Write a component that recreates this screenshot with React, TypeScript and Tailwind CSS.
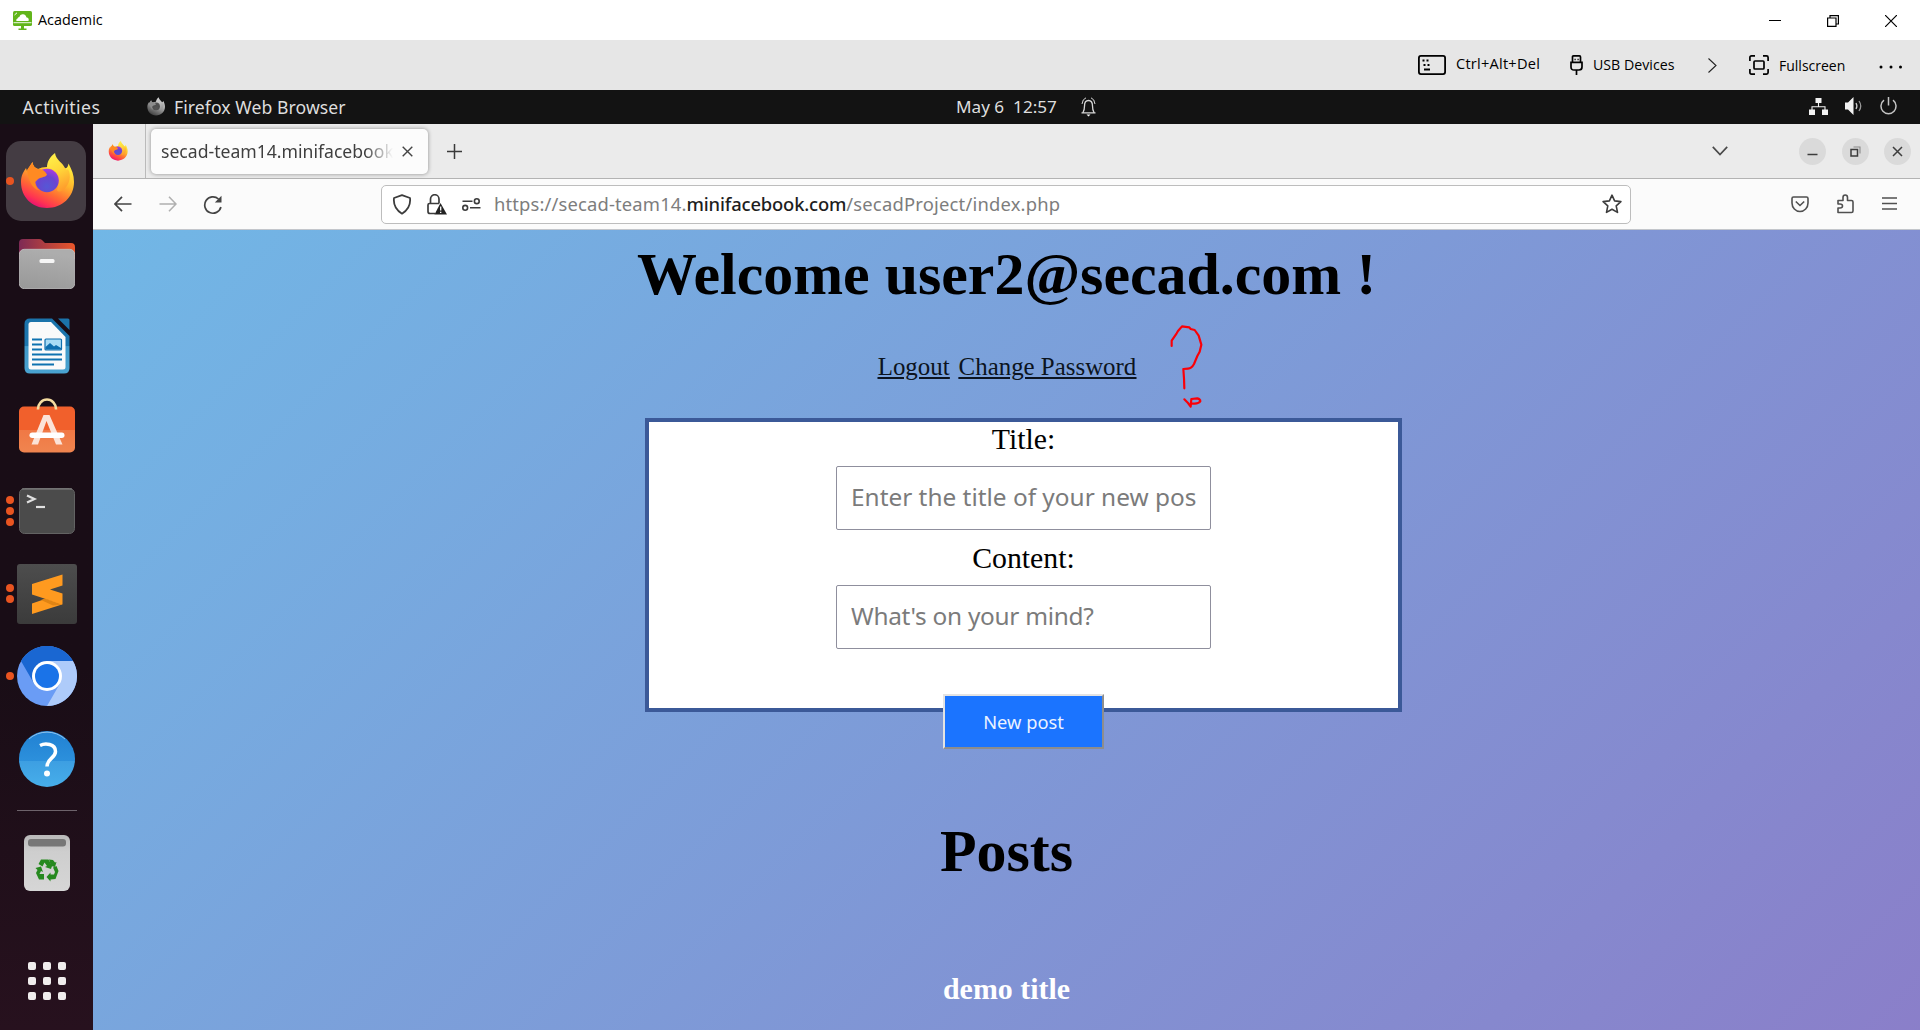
import type { ReactNode } from "react";

const ui = "font-['Noto_Sans',sans-serif]";
const win = "font-['Open_Sans','Noto_Sans',sans-serif]";
const serif = "font-['Liberation_Serif',serif]";

function FirefoxLogo({ id, className }: { id: string; className: string }) {
  return (
    <svg viewBox="-27 -28 54 56" className={className}>
      <defs>
        <linearGradient id={id + "-body"} x1="0.78" y1="0.1" x2="0.25" y2="1">
          <stop offset="0" stopColor="#ffe53a" />
          <stop offset="0.3" stopColor="#ffb52c" />
          <stop offset="0.6" stopColor="#ff6a33" />
          <stop offset="0.82" stopColor="#ff3352" />
          <stop offset="1" stopColor="#e0087c" />
        </linearGradient>
        <radialGradient id={id + "-globe"} cx="0.5" cy="0.75" r="0.7">
          <stop offset="0" stopColor="#5657d6" />
          <stop offset="0.6" stopColor="#6a45cf" />
          <stop offset="1" stopColor="#a23be0" />
        </radialGradient>
        <linearGradient id={id + "-flame"} x1="0.3" y1="0" x2="0.6" y2="1">
          <stop offset="0" stopColor="#fff04a" />
          <stop offset="0.45" stopColor="#ffd83a" />
          <stop offset="1" stopColor="#ff9a2c" />
        </linearGradient>
      </defs>
      <path
        d="M-26,1 C-26,-6 -23,-10 -21,-13 L-20,-10 C-18,-14 -16,-16 -14.5,-19 C-14,-15 -12,-13 -9,-12 C-5,-14 0,-15 6,-13 L18,-13 C20,-12 21,-15 21.5,-17.5 C25,-11 27,-6 27,1 C27,16 15,27 0,27 C-15,27 -26,16 -26,1Z"
        fill={`url(#${id}-body)`}
      />
      <path
        d="M0,-13 C0,-20 3,-24 8,-28 C9,-21 15,-19 18,-13 C19,-11 20,-11 21,-12 C25,-5 22,5 16,9 C13,11 11,11 10,9 C13,3 12,-5 9,-9 C6,-12 3,-13 0,-13Z"
        fill={`url(#${id}-flame)`}
      />
      <circle cx="0" cy="-0.5" r="11.8" fill={`url(#${id}-globe)`} />
      <path
        d="M-20,-11 L-14.5,-19 C-14,-15 -12,-13 -9,-12 C-5,-12.500 -2,-10 0,-6.500 C-1,-4 -4,-4 -7,-3 C-10,-2 -10,0 -12,1 C-12,4 -10,8 -7,9.5 C-12,9 -18,4 -20,-11Z"
        fill="#ff8a22"
      />
    </svg>
  );
}

function Slot({ dots = 0, active = false, children }: { dots?: number; active?: boolean; children: ReactNode }) {
  return (
    <div className="relative flex h-[82.5px] w-full shrink-0 items-center justify-center">
      {active && <div className="absolute left-[6px] top-[1px] h-[80px] w-[80px] rounded-[15px] bg-[#443c43]" />}
      {dots > 0 && (
        <div className="absolute left-[6px] top-0 flex h-full flex-col items-center justify-center gap-[3px]">
          {Array.from({ length: dots }, (_, i) => (
            <span key={i} className="h-2 w-2 rounded-full bg-[#e95420]" />
          ))}
        </div>
      )}
      <div className="relative flex items-center justify-center">{children}</div>
    </div>
  );
}

function Files() {
  return (
    <svg width="56" height="50" viewBox="0 0 56 50">
      <defs>
        <linearGradient id="files-back" x1="0" x2="1">
          <stop offset="0" stopColor="#7d2a55" />
          <stop offset="1" stopColor="#e9562a" />
        </linearGradient>
        <linearGradient id="files-front" x1="0" x2="0.3" y1="1" y2="0">
          <stop offset="0" stopColor="#989898" />
          <stop offset="1" stopColor="#adadad" />
        </linearGradient>
      </defs>
      <path d="M0,14 V4 Q0,0 4,0 H20 Q22,0 23,1 L26,4 H52 Q56,4 56,8 V20 H0Z" fill="url(#files-back)" />
      <rect x="0.3" y="10.3" width="55.4" height="39.4" rx="5" fill="url(#files-front)" stroke="#c4c4c4" strokeWidth="0.8" />
      <rect x="20.5" y="20" width="15" height="4" rx="1.5" fill="#f5f5f5" />
    </svg>
  );
}

function Writer() {
  return (
    <svg width="46" height="56" viewBox="0 0 46 56">
      <defs>
        <linearGradient id="writer" x1="0" x2="0" y1="0" y2="1">
          <stop offset="0" stopColor="#1b73aa" />
          <stop offset="0.5" stopColor="#1d78b0" />
          <stop offset="0.51" stopColor="#3f9aca" />
          <stop offset="1" stopColor="#4aa3d0" />
        </linearGradient>
      </defs>
      <path d="M6,0.5 H28 L45.5,18 V50 Q45.5,55.5 40,55.5 H6 Q0.5,55.5 0.5,50 V6 Q0.5,0.5 6,0.5Z" fill="url(#writer)" />
      <path d="M34,0.5 H44 Q45.500,0.500 45.500,2 V12Z" fill="#1b73aa" />
      <path d="M7,4 H27 L41.500,19 V49 Q41.500,51.500 39,51.500 H7 Q4.500,51.500 4.500,49 V6.500 Q4.500,4 7,4Z" fill="#fafafa" />
      <path d="M8,21.500 H18 M8,26.500 H18 M8,31.500 H18 M8,36.500 H38 M8,41.500 H38 M8,46.500 H30" stroke="#0f72b0" strokeWidth="2.2" />
      <rect x="21" y="21" width="16.500" height="11" rx="1" fill="#a9dcf5" stroke="#0f6fae" strokeWidth="1.2" />
      <path d="M21.500,31.500 V29 L26,25 L30,28.500 L32,27 L37,30 V31.500Z" fill="#0f6fae" />
    </svg>
  );
}

function Software() {
  return (
    <svg width="56" height="56" viewBox="0 0 56 56" className="-mt-[7px]">
      <defs>
        <linearGradient id="soft" x1="0" x2="0" y1="0" y2="1">
          <stop offset="0" stopColor="#f1602c" />
          <stop offset="0.5" stopColor="#f1602c" />
          <stop offset="0.51" stopColor="#f07845" />
          <stop offset="1" stopColor="#f0854f" />
        </linearGradient>
      </defs>
      <rect x="0" y="9.500" width="56" height="46" rx="5" fill="url(#soft)" />
      <path d="M19,12.500 V12 A9,9.500 0 0 1 37,12 V12.500" fill="none" stroke="#f5dca0" strokeWidth="2.600" />
      <path d="M12.500,47.500 L24.500,18 H30.500 L43.500,47.500 H37 L27.500,24 L19,47.500Z" fill="#fbe3d8" />
      <rect x="10.500" y="35.500" width="35" height="5.500" rx="2.700" fill="#fff" />
    </svg>
  );
}

function Terminal() {
  return (
    <svg width="56" height="46" viewBox="0 0 56 46">
      <rect x="0.500" y="0.500" width="55" height="45" rx="5" fill="#4b4b4b" stroke="#636363" />
      <path d="M3,1 H53" stroke="#858585" strokeWidth="1" />
      <path d="M8,7.500 L15.500,11 L8,14.500" fill="none" stroke="#e0e0e0" strokeWidth="2.200" />
      <path d="M17,19 H26" stroke="#e0e0e0" strokeWidth="2.200" />
    </svg>
  );
}

function Sublime() {
  return (
    <svg width="60" height="60" viewBox="0 0 60 60">
      <defs>
        <linearGradient id="subl" x1="0" x2="0" y1="0" y2="1">
          <stop offset="0" stopColor="#4d4d4d" />
          <stop offset="1" stopColor="#3b3b3b" />
        </linearGradient>
      </defs>
      <rect width="60" height="60" rx="3" fill="url(#subl)" />
      <path d="M15,39.500 L28,35 L45,39 V40.500 L15,50Z" fill="#ff9a1f" />
      <path d="M28,34.500 L45,40.500 L36,41.500 L24,36Z" fill="#e08414" />
      <path d="M45.500,10.500 V21.500 L33,25.500 L45.500,29.500 V40.500 L15,30.500 V20Z" fill="#ff9a1f" />
    </svg>
  );
}

function Chromium() {
  return (
    <svg width="60" height="60" viewBox="-30 -30 60 60">
      <circle r="30" fill="#6a9cf5" />
      <path d="M0,-15 H26 A30,30 0 0 1 0,30 L13,7.500Z" fill="#aecbfa" />
      <path d="M-26,-15 A30,30 0 0 1 26,-15 H0 L-13,7.500Z" fill="#1a67d2" />
      <circle r="15" fill="#fff" />
      <circle r="12" fill="#1a73e8" />
    </svg>
  );
}

function Help() {
  return (
    <svg width="56" height="56" viewBox="-28 -28 56 56">
      <defs>
        <linearGradient id="help" x1="0" x2="0" y1="0" y2="1">
          <stop offset="0" stopColor="#2181d2" />
          <stop offset="0.530" stopColor="#2c90dc" />
          <stop offset="0.540" stopColor="#3d9fe2" />
          <stop offset="1" stopColor="#47aeea" />
        </linearGradient>
      </defs>
      <circle r="28" fill="url(#help)" />
      <path d="M-18,-20 A27,27 0 0 1 18,-20" stroke="#8fc4ee" fill="none" />
      <path d="M-7,-13.500 C-2,-16 8.500,-15.500 8.500,-7.500 C8.500,-1 0,-0.500 0,7.500" fill="none" stroke="#fff" strokeWidth="3.500" />
      <circle cy="14.500" r="3" fill="#fff" />
    </svg>
  );
}

function Trash() {
  return (
    <svg width="46" height="56" viewBox="0 0 46 56">
      <defs>
        <linearGradient id="trash" x1="0" x2="0" y1="0" y2="1">
          <stop offset="0" stopColor="#b9b9b9" />
          <stop offset="0.300" stopColor="#cecece" />
          <stop offset="1" stopColor="#d6d6d6" />
        </linearGradient>
      </defs>
      <rect width="46" height="56" rx="6" fill="url(#trash)" />
      <rect x="4" y="4" width="38" height="7.500" rx="3" fill="#777" />
      <g fill="#26891f" transform="translate(23 36)">
        <path d="M-6,-11.500 H1.500 L4,-7 L6,-8 L4,-2 L-2,-4 L0,-5 L-2.500,-8.500 L-4.500,-4.500 L-8.500,-7Z" />
        <path d="M-11.500,-3 L-6,-4.500 L-4,1 L-6,0 L-7.500,3 H-3 V8.500 H-8 L-11,2 L-9.500,-1Z" />
        <path d="M6,-3.500 L9.500,-5 L11.500,0 L8.500,8 L3.500,8.500 V10.500 L-0.500,6 L3.500,1.500 V3.500 H7 L8,1 Z" />
        <path d="M2,-11.500 L6,-11 L8,-8.500 L9.500,-9 L8,-4 L4,-5Z" />
      </g>
    </svg>
  );
}

function Dock() {
  return (
    <aside className="flex w-[93px] shrink-0 flex-col items-center bg-linear-to-b from-[#190d16] from-60% to-[#27111e] pt-[15.750px]">
      <Slot active dots={1}>
        <FirefoxLogo id="dock" className="h-[56px] w-[54px]" />
      </Slot>
      <Slot>
        <Files />
      </Slot>
      <Slot>
        <Writer />
      </Slot>
      <Slot>
        <Software />
      </Slot>
      <Slot dots={3}>
        <Terminal />
      </Slot>
      <Slot dots={2}>
        <Sublime />
      </Slot>
      <Slot dots={1}>
        <Chromium />
      </Slot>
      <Slot>
        <Help />
      </Slot>
      <div className="mt-[10px] h-px w-[60px] shrink-0 bg-[#6d636b]" />
      <div className="mt-[24px] shrink-0">
        <Trash />
      </div>
      <div className="mt-[71.500px] grid shrink-0 grid-cols-3 gap-[7px]">
        {Array.from({ length: 9 }, (_, i) => (
          <span key={i} className="h-2 w-2 rounded-[2px] bg-[#f0eded]" />
        ))}
      </div>
    </aside>
  );
}

function TitleBar() {
  return (
    <div className={`flex h-10 shrink-0 items-center bg-white text-black ${win}`}>
      <svg width="19" height="19" viewBox="0 0 19 19" className="ml-[12.500px] shrink-0">
        <path d="M1.500,0 H17.500 Q19,0 19,1.500 V13.500 Q19,15 17.500,15 H1.500 Q0,15 0,13.500 V1.500 Q0,0 1.500,0Z" fill="#62b51b" />
        <path d="M3.500,10 Q2.300,8.500 4.500,7.500 Q4.800,6 6.300,6 Q7,3 10,3.300 Q13,3.700 13.300,6.300 Q16.500,7 15.500,10Z" fill="#fff" />
        <path d="M1.500,4 L4,1.800" stroke="#fff" strokeWidth="1" />
        <path d="M0.500,11.700 H18.500" stroke="#fff" strokeWidth="0.900" />
        <path d="M8,15 H11 V17.500 H13.500 V19 H5.500 V17.500 H8Z" fill="#62b51b" />
      </svg>
      <span className="ml-[6.500px] flex-1 text-[14.400px] leading-10">Academic</span>
      <div className="mr-[23.500px] flex items-center gap-[46px]" aria-label="window controls">
        <svg width="12" height="12" viewBox="0 0 12 12">
          <path d="M0,6.500 H12" stroke="#000" />
        </svg>
        <svg width="12" height="12" viewBox="0 0 12 12" fill="none" stroke="#000" strokeWidth="1.200" className="mt-px">
          <path d="M0.600,3 H9 V11.400 H0.600Z M3,3 V0.600 H11.400 V9 H9" />
        </svg>
        <svg width="12" height="12" viewBox="0 0 12 12" fill="none" stroke="#000" strokeWidth="1.200" className="mt-px">
          <path d="M0,0 L12,12 M12,0 L0,12" />
        </svg>
      </div>
    </div>
  );
}

function ViewerToolbar() {
  return (
    <div className={`flex h-[50px] shrink-0 items-center bg-[#e6e6e6] pl-[1418px] text-black ${win}`}>
      <svg width="28" height="20" viewBox="0 0 28 20" className="shrink-0">
        <rect x="0.900" y="0.900" width="26.200" height="18.200" rx="2" fill="none" stroke="#000" strokeWidth="1.800" />
        <path d="M4.500,5.500 h2 M8.500,5.500 h2 M5.500,10 h2 M9.500,10 h2 M6,14.500 h6" stroke="#000" strokeWidth="1.800" />
      </svg>
      <span className="mb-[2px] ml-[10px] w-[114px] text-[14.600px] tracking-[0.230px]">Ctrl+Alt+Del</span>
      <svg width="13" height="20" viewBox="0 0 13 20" fill="none" stroke="#000" strokeWidth="1.700" className="shrink-0">
        <path d="M2.500,7 V2 Q2.500,0.900 3.500,0.900 H9.500 Q10.500,0.900 10.500,2 V7 M1,7.300 H12 V12 Q12,15 9,15 H4 Q1,15 1,12Z M6.500,15 V20" />
        <path d="M4.500,4.500 h1.200 M7.500,4.500 h1.200" />
      </svg>
      <span className="ml-[10px] w-[115px] text-[14.200px]">USB Devices</span>
      <svg width="9" height="15" viewBox="0 0 9 15" fill="none" stroke="#222" strokeWidth="1.100" className="shrink-0">
        <path d="M0.500,0.500 L8,7.500 L0.500,14.500" />
      </svg>
      <svg width="20" height="20" viewBox="0 0 20 20" fill="none" stroke="#000" strokeWidth="1.700" className="ml-[32px] shrink-0">
        <path d="M6,0.900 H2.500 Q0.900,0.900 0.900,2.500 V6 M14,0.900 H17.500 Q19.100,0.900 19.100,2.500 V6 M6,19.100 H2.500 Q0.900,19.100 0.900,17.500 V14 M14,19.100 H17.500 Q19.100,19.100 19.100,17.500 V14" />
        <rect x="5" y="6" width="10" height="8" rx="1" />
      </svg>
      <span className="ml-[10px] w-[100px] text-[14px]">Fullscreen</span>
      <svg width="24" height="4" viewBox="0 0 24 4" className="mt-[3px] shrink-0">
        <circle cx="2" cy="2" r="1.500" />
        <circle cx="12" cy="2" r="1.500" />
        <circle cx="21.500" cy="2" r="1.500" />
      </svg>
    </div>
  );
}

function TopPanel() {
  return (
    <div className={`flex h-[34px] shrink-0 items-center bg-[#131313] text-[#dedede] ${ui}`}>
      <span className="ml-[22.500px] w-[124px] text-[17.700px] tracking-[0.420px]">Activities</span>
      <FirefoxLogo id="panel" className="mt-[-2px] h-[19px] w-[18px] brightness-90 grayscale" />
      <span className="ml-[9.500px] w-[782px] text-[17.600px] tracking-[0.080px]">Firefox Web Browser</span>
      <span className="w-[125px] whitespace-pre text-[17.150px]">May 6  12:57</span>
      <svg width="15" height="20" viewBox="0 0 15 20" fill="none" stroke="#d8d8d8" strokeWidth="1.300" className="-mt-px shrink-0">
        <path d="M0.500,15.800 H14.500 M2,15.500 Q3.500,13 3.500,9 Q3.500,3.500 7.500,3.500 Q11.500,3.500 11.500,9 Q11.500,13 13,15.500" />
        <path d="M1,7 Q1.500,2 5,0.800 M14,7 Q13.500,2 10,0.800" strokeWidth="1" />
        <path d="M5.500,17.500 H9.500 L7.500,19.500Z" fill="#fff" stroke="none" />
      </svg>
      <svg width="19" height="17" viewBox="0 0 19 17" className="ml-[712.500px] mt-[-2px] shrink-0">
        <path d="M6.500,0 H12.500 V5 H6.500Z M0,11.500 H6 V17 H0Z M13,11.500 H19 V17 H13Z" fill="#f2f2f2" />
        <path d="M9.500,5 V8.500 M3,12 V8.700 H16 V12" fill="none" stroke="#f2f2f2" strokeWidth="1.100" />
      </svg>
      <svg width="18" height="18" viewBox="0 0 18 18" className="ml-[17.500px] mt-[-2px] shrink-0">
        <path d="M0,5.500 H3 L8.500,0 V18 L3,12.500 H0Z" fill="#f2f2f2" />
        <path d="M11,6 Q12.800,9 11,12" fill="none" stroke="#d0d0d0" strokeWidth="1.300" />
        <path d="M14,4 Q17.500,9 14,14" fill="none" stroke="#999" strokeWidth="1.300" />
      </svg>
      <svg width="17" height="18" viewBox="0 0 17 18" fill="none" stroke="#c4c4c4" strokeWidth="1.500" className="ml-[16.500px] mt-[-2px] shrink-0">
        <path d="M4,3.200 A7.500,7.500 0 1 0 13,3.200 M8.500,0 V8.500" />
      </svg>
    </div>
  );
}

function WindowButton({ children }: { children: ReactNode }) {
  return (
    <span className="flex h-[27px] w-[27px] items-center justify-center rounded-full bg-[#dadada]">
      <svg width="11" height="11" viewBox="0 0 11 11" fill="none" stroke="#3d3d3d" strokeWidth="1.500">
        {children}
      </svg>
    </span>
  );
}

function TabStrip() {
  return (
    <div className={`flex h-[55px] shrink-0 items-center border-b border-[#b3b3b3] bg-[#ebebeb] ${ui}`}>
      <div className="flex h-full w-[53px] items-center justify-center border-r border-[#bababa]">
        <FirefoxLogo id="pinned" className="mr-[3px] h-[20px] w-[20px]" />
      </div>
      <div className="ml-[5px] flex h-[45px] w-[277px] items-center rounded-[5px] bg-[#fcfcfc] shadow-[0_0_4px_rgba(0,0,0,0.4)]">
        <span className="ml-[10px] w-[232px] overflow-hidden whitespace-nowrap mask-r-from-88% mask-r-to-100% text-[17.600px] text-[#3f3f3f]">
          secad-team14.minifacebook
        </span>
        <svg width="11" height="11" viewBox="0 0 11 11" fill="none" stroke="#444" strokeWidth="1.400" className="ml-[9px]">
          <path d="M0.700,0.700 L10.300,10.300 M10.300,0.700 L0.700,10.300" />
        </svg>
      </div>
      <svg width="15" height="15" viewBox="0 0 15 15" fill="none" stroke="#3a3a3a" strokeWidth="1.500" className="ml-[19px] mt-px">
        <path d="M7.500,0 V15 M0,7.500 H15" />
      </svg>
      <div className="flex-1" />
      <svg width="16" height="10" viewBox="0 0 16 10" fill="none" stroke="#4a4a4a" strokeWidth="1.700" className="mr-[71px]">
        <path d="M0.800,0.800 L8,8.500 L15.200,0.800" />
      </svg>
      <div className="mr-[9px] flex gap-[15.500px]">
        <WindowButton>
          <path d="M0.500,8.500 H10.500" />
        </WindowButton>
        <WindowButton>
          <path d="M1,3.500 H7.500 V10 H1Z" />
          <path d="M3.500,1 H10 V7.500" stroke="#8a8a8a" strokeWidth="1.100" />
        </WindowButton>
        <WindowButton>
          <path d="M1,1 L10,10 M10,1 L1,10" />
        </WindowButton>
      </div>
    </div>
  );
}

function NavBar() {
  return (
    <div className={`flex h-[51px] shrink-0 items-center border-b border-[#c3c6cb] bg-[#fbfbfb] ${ui}`}>
      <svg width="18" height="16" viewBox="0 0 18 16" fill="none" stroke="#444" strokeWidth="1.700" className="ml-[20.500px] shrink-0">
        <path d="M8,0.800 L1,8 L8,15.200 M1,8 H17.500" />
      </svg>
      <svg width="18" height="16" viewBox="0 0 18 16" fill="none" stroke="#b0b0b0" strokeWidth="1.600" className="ml-[27px] shrink-0">
        <path d="M10,0.800 L17,8 L10,15.200 M17,8 H0.500" />
      </svg>
      <svg width="20" height="20" viewBox="0 0 20 20" fill="none" stroke="#444" strokeWidth="1.700" className="ml-[26px] mt-[2px] shrink-0">
        <path d="M17.900,12 A8.200,8.200 0 1 1 15.500,4" />
        <path d="M18.500,0.800 V7.500 H11.800Z" fill="#444" stroke="none" />
      </svg>
      <div className="ml-[158.500px] flex h-[39px] w-[1250px] shrink-0 items-center rounded-[5px] border border-[#bdbdbd] bg-white">
        <svg width="20" height="21" viewBox="0 0 20 21" fill="none" stroke="#3c3c3c" strokeWidth="1.800" className="ml-[9.500px] shrink-0">
          <path d="M10,1.200 L18,4 Q19.200,14 10,19.700 Q0.800,14 2,4Z" strokeLinejoin="round" />
        </svg>
        <svg width="20" height="21" viewBox="0 0 20 21" fill="none" stroke="#3c3c3c" strokeWidth="1.700" className="ml-[15px] shrink-0">
          <path d="M8,19.500 H3 Q1,19.500 1,17.500 V11 Q1,9.500 2.500,9.500 H12 M3.500,9.500 V5 A4.200,4.200 0 0 1 12,5 V9.500" />
          <path d="M13.500,9 L20,20.500 H7.500Z" fill="#222" stroke="none" />
          <path d="M13.700,12.500 V16.500 M13.700,17.700 V19" stroke="#fff" strokeWidth="1.300" />
        </svg>
        <svg width="19" height="13" viewBox="0 0 19 13" fill="none" stroke="#3c3c3c" strokeWidth="1.600" className="ml-[15.500px] shrink-0">
          <path d="M0.500,3.300 H10.500 M8,9.800 H18.500" />
          <circle cx="14.800" cy="3.200" r="2.400" />
          <circle cx="3.200" cy="9.800" r="2.400" />
        </svg>
        <span className="ml-[13px] flex-1 whitespace-nowrap text-[18.400px] text-[#7d7d7d]">
          <span className="tracking-[0.150px]">https://secad-team14.</span>
          <span className="font-medium tracking-[-0.170px] text-[#1e1e1e]">minifacebook.com</span>
          <span className="tracking-[0.200px]">/secadProject/index.php</span>
        </span>
        <svg width="20" height="20" viewBox="0 0 20 20" fill="none" stroke="#3c3c3c" strokeWidth="1.600" strokeLinejoin="round" className="mr-[8.500px] shrink-0">
          <path d="M10,1.200 L12.600,6.900 L18.900,7.600 L14.200,11.800 L15.500,18.400 L10,15.200 L4.500,18.400 L5.800,11.800 L1.100,7.600 L7.400,6.900Z" />
        </svg>
      </div>
      <svg width="18" height="17" viewBox="0 0 18 17" fill="none" stroke="#505050" strokeWidth="1.600" className="ml-[159.500px] shrink-0">
        <path d="M2.500,1 H15.500 Q17,1 17,2.500 V7 A8,8.500 0 0 1 1,7 V2.500 Q1,1 2.500,1Z" />
        <path d="M4.800,5.500 L9,9.500 L13.200,5.500" />
      </svg>
      <svg width="17" height="20" viewBox="0 0 17 20" fill="none" stroke="#505050" strokeWidth="1.600" strokeLinejoin="round" className="ml-[28px] shrink-0">
        <path d="M1,18.500 V14 H3 Q5.500,14 5.500,12 Q5.500,10 3,10 H1 V6.500 H6 V3.500 Q6,1 8.200,1 Q10.500,1 10.500,3.500 V6.500 H14.500 Q16,6.500 16,8 V17 Q16,18.500 14.500,18.500Z" />
      </svg>
      <svg width="15" height="13" viewBox="0 0 15 13" fill="none" stroke="#505050" strokeWidth="1.500" className="ml-[28.500px] mt-[-1px] shrink-0">
        <path d="M0,1 H15 M0,6.500 H15 M0,12 H15" />
      </svg>
    </div>
  );
}

function Field({ label, placeholder, tracking = "" }: { label: string; placeholder: string; tracking?: string }) {
  return (
    <label className="flex flex-col items-center gap-[10px]">
      <span className="text-[29.800px] leading-[34px] text-black">{label}</span>
      <input
        placeholder={placeholder}
        className={`h-[64px] w-[375px] rounded-[2px] border border-[#8f8f9d] bg-white px-[14px] pb-[3px] text-[24.400px] placeholder:text-[#7b7b7b] ${tracking} ${ui}`}
      />
    </label>
  );
}

function WebPage() {
  return (
    <main
      className={`relative flex-1 overflow-hidden bg-[linear-gradient(135deg,#71b7e6,#9b59b6)] bg-[length:1828px_2550px] bg-no-repeat pt-[10px] text-black ${serif}`}
    >
      <h1 className="text-center text-[59.900px] font-bold leading-[68px]">Welcome user2@secad.com !</h1>
      <div className="mt-[45px] flex justify-center gap-[9px] pl-px text-[24.900px] leading-[28px] text-[#0c1420] underline decoration-[1.500px] underline-offset-[2px]">
        <a>Logout</a>
        <a>Change Password</a>
      </div>
      <form className="ml-[552px] mt-[37px] flex h-[294px] w-[757px] flex-col items-center gap-[11px] border-4 border-[#3b5998] bg-white">
        <Field label="Title:" placeholder="Enter the title of your new post" />
        <Field label="Content:" placeholder="What's on your mind?" tracking="tracking-[-0.280px]" />
        <button
          type="button"
          className={`mt-[34px] h-[55px] w-[161px] shrink-0 border-[2.500px] border-b-[#8d8d8d] border-l-[#e3e3e3] border-r-[#8d8d8d] border-t-[#e3e3e3] bg-[#1b74ff] text-[18.300px] text-[#eaf2ff] ${ui}`}
        >
          New post
        </button>
      </form>
      <h1 className="mt-[105px] text-center text-[59.900px] font-bold leading-[68px]">Posts</h1>
      <h3 className="mt-[87px] text-center text-[29.900px] font-bold leading-[34px] text-white">demo title</h3>
      <svg
        width="60"
        height="90"
        viewBox="0 0 180 270"
        fill="none"
        stroke="#fb0007"
        strokeWidth="6.500"
        strokeLinecap="round"
        strokeLinejoin="round"
        className="absolute left-[1067px] top-[90px]"
      >
        <path d="M35,78 V62 L50,40 L54,33 L66,19 L88,22 L92,27 L104,30 L116,47 L124,74 L119,95 L112,108 L102,132 Q95,145 84,146 L70,147 L72,175 L73,205" />
        <path d="M73,238 L84,249 L92,260 L94,237 L112,235 Q121,237 121,244 Q116,253 94,250" />
      </svg>
    </main>
  );
}

export default function App() {
  return (
    <div className="flex h-[1030px] w-[1920px] flex-col overflow-hidden">
      <TitleBar />
      <ViewerToolbar />
      <TopPanel />
      <div className="flex min-h-0 flex-1">
        <Dock />
        <div className="flex min-w-0 flex-1 flex-col">
          <TabStrip />
          <NavBar />
          <WebPage />
        </div>
      </div>
    </div>
  );
}
